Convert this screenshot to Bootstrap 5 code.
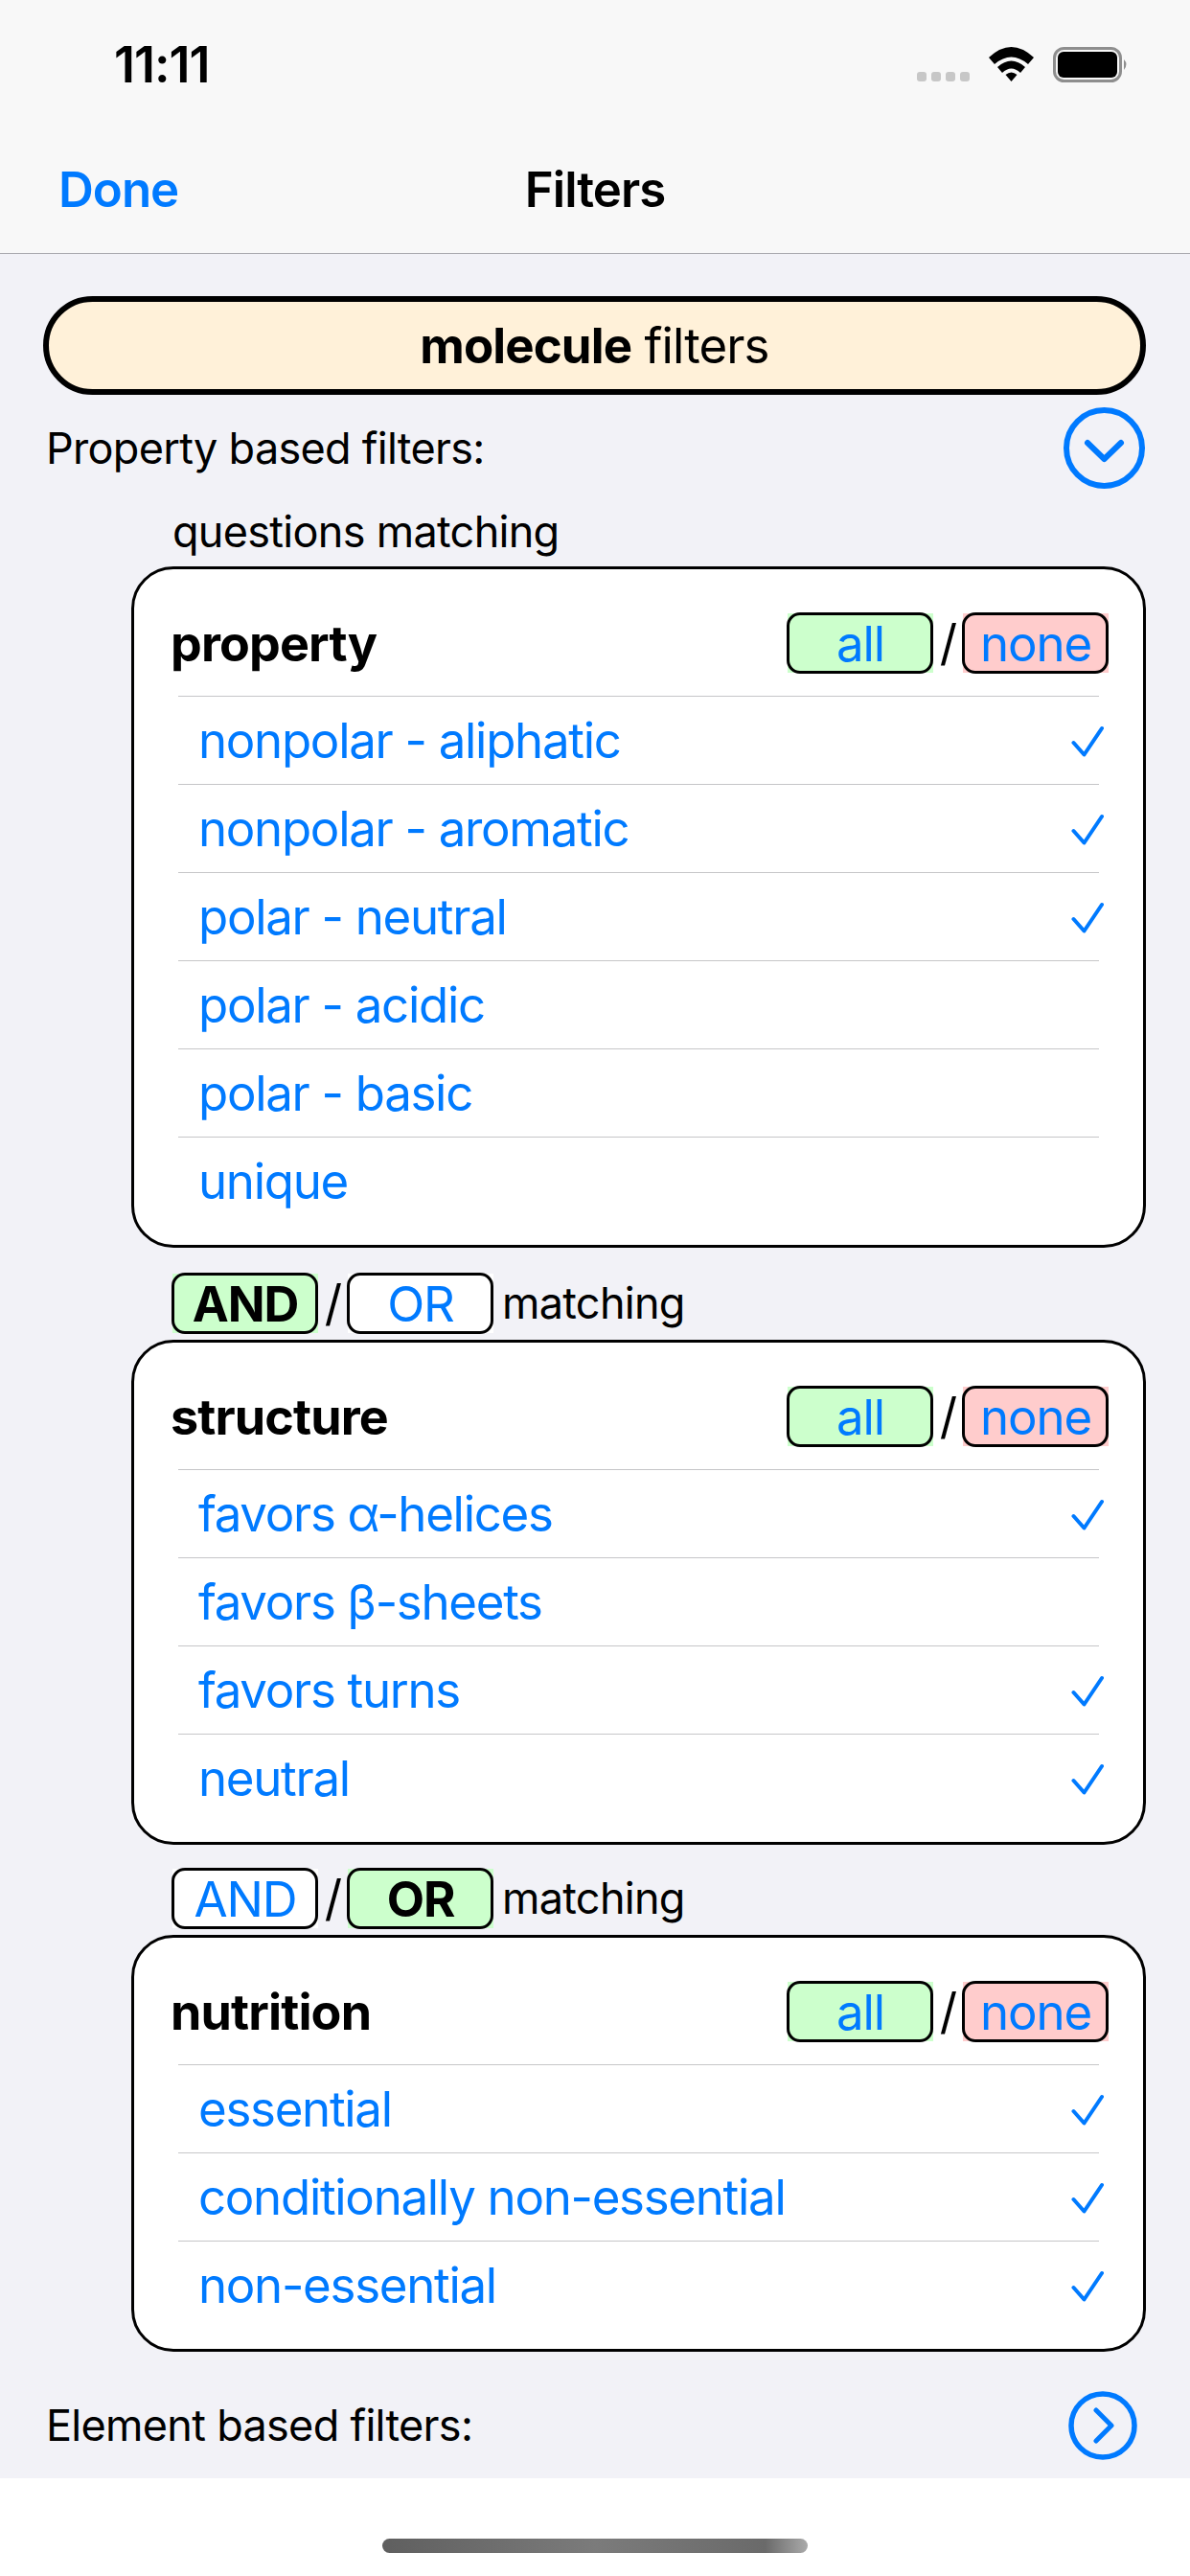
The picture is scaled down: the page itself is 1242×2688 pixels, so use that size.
<!DOCTYPE html>
<html lang="en">
<head>
<meta charset="utf-8">
<title>Filters</title>
<link href="https://cdn.jsdelivr.net/npm/bootstrap@5.3.0/dist/css/bootstrap.min.css" rel="stylesheet">
<style>
html,body{margin:0;width:1242px;height:2688px;overflow:hidden}
body{font-family:Inter,"Noto Sans",sans-serif;font-size:45px;color:#000;background:#fff;line-height:60px;letter-spacing:-.7px}
.ios-top{background:#f8f8f8;height:265px;border-bottom:1px solid #a9a9ae}
.ios-status{height:132px;padding:36px 64px 0 119px}
.ios-time{font-weight:600;font-size:52px;line-height:64px;letter-spacing:-1px}
.ios-dots{gap:5px;margin:39px 20px 0 0}
.ios-dots i{display:block;width:10px;height:10px;border-radius:3px;background:#c7c7c7}
.ios-wifi{display:block;width:47px;height:36px;margin:13px 20px 0 0}
.ios-batt{display:block;width:79px;height:37px;margin-top:13px}
.ios-nav{display:grid;grid-template-columns:1fr auto 1fr;height:132px;padding:0 61px;align-items:center}
.ios-nav a{color:#007aff;font-weight:600;text-decoration:none;font-size:51px;line-height:68px;letter-spacing:-1px}
.ios-nav span{font-weight:600;font-size:51px;line-height:68px;letter-spacing:-1px}
.ios-body{background:#f2f2f7;height:2321px;padding-top:44px}
.ios-pill{margin:0 46px 0 45px;height:103px;border:6px solid #000;border-radius:52px;background:#fff1d9;font-size:51px;letter-spacing:-.9px}
.ios-pill b{font-weight:700}
.ios-line{padding:0 47px 0 48px;height:85px;margin-top:13px}
.ios-line svg{display:block}
.ios-sub{margin:14px 0 5px 180px;line-height:62px;height:62px}
.ios-card.card{margin-left:137px;width:1059px;border:3px solid #000;border-radius:44px;background:#fff}
.ios-head{padding:46px 36px 0 38px;height:132px}
.ios-head strong{font-weight:700;font-size:52px;line-height:64px;letter-spacing:-.85px}
.ios-toggle.btn{position:relative;width:152px;height:62px;padding:0;border:0;border-radius:0;font-size:51px;line-height:64px;color:#007aff;letter-spacing:-1.1px;font-family:inherit;display:block}
.ios-toggle.btn::after{content:"";position:absolute;inset:-1px 0 -1px -1px;border:3px solid #000;border-radius:14px}
.tg-green.btn{background:#ccffcc}
.tg-red.btn{background:#ffcccc}
.tg-white.btn{background:#fff}
.tg-on.btn{font-weight:700;color:#000}
.ios-slash{width:31px;text-align:center;line-height:62px;font-size:51px}
.ios-card>.ios-list.list-group{margin:0 46px 21px;border:0;border-radius:0}
.ios-list .list-group-item{height:92px;padding:0 0 0 21px;border:0;border-top:1px solid #c6c6c8;border-radius:0;background:transparent;color:#007aff;font-size:51px;line-height:60px;letter-spacing:-1.3px;margin:0}
.ios-list .list-group-item svg{margin-right:-5px;display:block}
.ios-match{margin:27px 0 7px 180px;height:62px}
.ios-match.ios-match-b{margin-top:25px}
.ios-match span.ios-word{margin-left:9px;line-height:62px}
.ios-line2{padding:0 55px 0 48px;height:72px;margin-top:41px}
.ios-foot{height:102px;padding-top:63px}
.ios-bar{width:444px;height:15px;border-radius:8px;background:linear-gradient(90deg,#5f5f5f,#7b7b7b 50%,#6a6a6a 90%,#aaa)}
</style>
</head>
<body>
<header class="ios-top">
  <div class="ios-status d-flex justify-content-between align-items-start">
    <div class="ios-time">11:11</div>
    <div class="d-flex align-items-start">
      <div class="ios-dots d-flex"><i></i><i></i><i></i><i></i></div>
      <svg class="ios-wifi" viewBox="0 0 47 36"><path d="M0 11Q23.5-11 47 11L41 18Q23.5 3 6 18Z"/><path d="M9 21Q23.5 8 38 21L33 27Q23.5 18 14 27Z"/><path d="M17.5 29Q23.5 24 29.5 29L23.5 36Z"/></svg>
      <svg class="ios-batt" viewBox="0 0 79 37"><rect x="1.5" y="1.5" width="69" height="34" rx="10" fill="none" stroke="#8e8e8e" stroke-width="3"/><rect x="5" y="5" width="62" height="27" rx="6"/><path d="M74 13q5 5 0 11Z" fill="#8e8e8e"/></svg>
    </div>
  </div>
  <nav class="ios-nav">
    <a href="#">Done</a>
    <span>Filters</span>
    <div></div>
  </nav>
</header>

<main class="ios-body">
  <div class="ios-pill d-flex justify-content-center align-items-center"><div><b>molecule</b> filters</div></div>

  <div class="ios-line d-flex justify-content-between align-items-center">
    <div>Property based filters:</div>
    <svg width="85" height="85" viewBox="0 0 85 85" fill="none" stroke="#007aff"><circle cx="42.5" cy="42.5" r="39.5" stroke-width="6"/><path d="M25 37L42.5 54 60 37" stroke-width="6" stroke-linecap="round" stroke-linejoin="round"/></svg>
  </div>
  <div class="ios-sub">questions matching</div>

  <section class="ios-card card">
    <div class="ios-head d-flex justify-content-between align-items-start">
      <strong>property</strong>
      <div class="d-flex"><button class="ios-toggle btn tg-green">all</button><span class="ios-slash">/</span><button class="ios-toggle btn tg-red">none</button></div>
    </div>
    <ul class="ios-list list-group">
      <li class="list-group-item d-flex justify-content-between align-items-center">nonpolar - aliphatic<svg width="34" height="34" viewBox="0 0 34 34" fill="none" stroke="#007aff" stroke-width="4" stroke-linecap="round" stroke-linejoin="round"><path d="M2.5 19L13.5 31.5 32 4"/></svg></li>
      <li class="list-group-item d-flex justify-content-between align-items-center">nonpolar - aromatic<svg width="34" height="34" viewBox="0 0 34 34" fill="none" stroke="#007aff" stroke-width="4" stroke-linecap="round" stroke-linejoin="round"><path d="M2.5 19L13.5 31.5 32 4"/></svg></li>
      <li class="list-group-item d-flex justify-content-between align-items-center">polar - neutral<svg width="34" height="34" viewBox="0 0 34 34" fill="none" stroke="#007aff" stroke-width="4" stroke-linecap="round" stroke-linejoin="round"><path d="M2.5 19L13.5 31.5 32 4"/></svg></li>
      <li class="list-group-item d-flex justify-content-between align-items-center">polar - acidic</li>
      <li class="list-group-item d-flex justify-content-between align-items-center">polar - basic</li>
      <li class="list-group-item d-flex justify-content-between align-items-center">unique</li>
    </ul>
  </section>

  <div class="ios-match d-flex">
    <button class="ios-toggle btn tg-green tg-on">AND</button><span class="ios-slash">/</span><button class="ios-toggle btn tg-white">OR</button><span class="ios-word">matching</span>
  </div>

  <section class="ios-card card">
    <div class="ios-head d-flex justify-content-between align-items-start">
      <strong>structure</strong>
      <div class="d-flex"><button class="ios-toggle btn tg-green">all</button><span class="ios-slash">/</span><button class="ios-toggle btn tg-red">none</button></div>
    </div>
    <ul class="ios-list list-group">
      <li class="list-group-item d-flex justify-content-between align-items-center">favors α-helices<svg width="34" height="34" viewBox="0 0 34 34" fill="none" stroke="#007aff" stroke-width="4" stroke-linecap="round" stroke-linejoin="round"><path d="M2.5 19L13.5 31.5 32 4"/></svg></li>
      <li class="list-group-item d-flex justify-content-between align-items-center">favors β-sheets</li>
      <li class="list-group-item d-flex justify-content-between align-items-center">favors turns<svg width="34" height="34" viewBox="0 0 34 34" fill="none" stroke="#007aff" stroke-width="4" stroke-linecap="round" stroke-linejoin="round"><path d="M2.5 19L13.5 31.5 32 4"/></svg></li>
      <li class="list-group-item d-flex justify-content-between align-items-center">neutral<svg width="34" height="34" viewBox="0 0 34 34" fill="none" stroke="#007aff" stroke-width="4" stroke-linecap="round" stroke-linejoin="round"><path d="M2.5 19L13.5 31.5 32 4"/></svg></li>
    </ul>
  </section>

  <div class="ios-match ios-match-b d-flex">
    <button class="ios-toggle btn tg-white">AND</button><span class="ios-slash">/</span><button class="ios-toggle btn tg-green tg-on">OR</button><span class="ios-word">matching</span>
  </div>

  <section class="ios-card card">
    <div class="ios-head d-flex justify-content-between align-items-start">
      <strong>nutrition</strong>
      <div class="d-flex"><button class="ios-toggle btn tg-green">all</button><span class="ios-slash">/</span><button class="ios-toggle btn tg-red">none</button></div>
    </div>
    <ul class="ios-list list-group">
      <li class="list-group-item d-flex justify-content-between align-items-center">essential<svg width="34" height="34" viewBox="0 0 34 34" fill="none" stroke="#007aff" stroke-width="4" stroke-linecap="round" stroke-linejoin="round"><path d="M2.5 19L13.5 31.5 32 4"/></svg></li>
      <li class="list-group-item d-flex justify-content-between align-items-center">conditionally non-essential<svg width="34" height="34" viewBox="0 0 34 34" fill="none" stroke="#007aff" stroke-width="4" stroke-linecap="round" stroke-linejoin="round"><path d="M2.5 19L13.5 31.5 32 4"/></svg></li>
      <li class="list-group-item d-flex justify-content-between align-items-center">non-essential<svg width="34" height="34" viewBox="0 0 34 34" fill="none" stroke="#007aff" stroke-width="4" stroke-linecap="round" stroke-linejoin="round"><path d="M2.5 19L13.5 31.5 32 4"/></svg></li>
    </ul>
  </section>

  <div class="ios-line2 d-flex justify-content-between align-items-center">
    <div>Element based filters:</div>
    <svg width="72" height="72" viewBox="0 0 72 72" fill="none" stroke="#007aff"><circle cx="36" cy="36" r="33" stroke-width="5.5"/><path d="M29 20L45 36 29 52" stroke-width="5" stroke-linecap="round" stroke-linejoin="round"/></svg>
  </div>
</main>
<footer class="ios-foot d-flex justify-content-center"><div class="ios-bar"></div></footer>
<script src="https://cdn.jsdelivr.net/npm/bootstrap@5.3.0/dist/js/bootstrap.bundle.min.js"></script>
</body>
</html>
